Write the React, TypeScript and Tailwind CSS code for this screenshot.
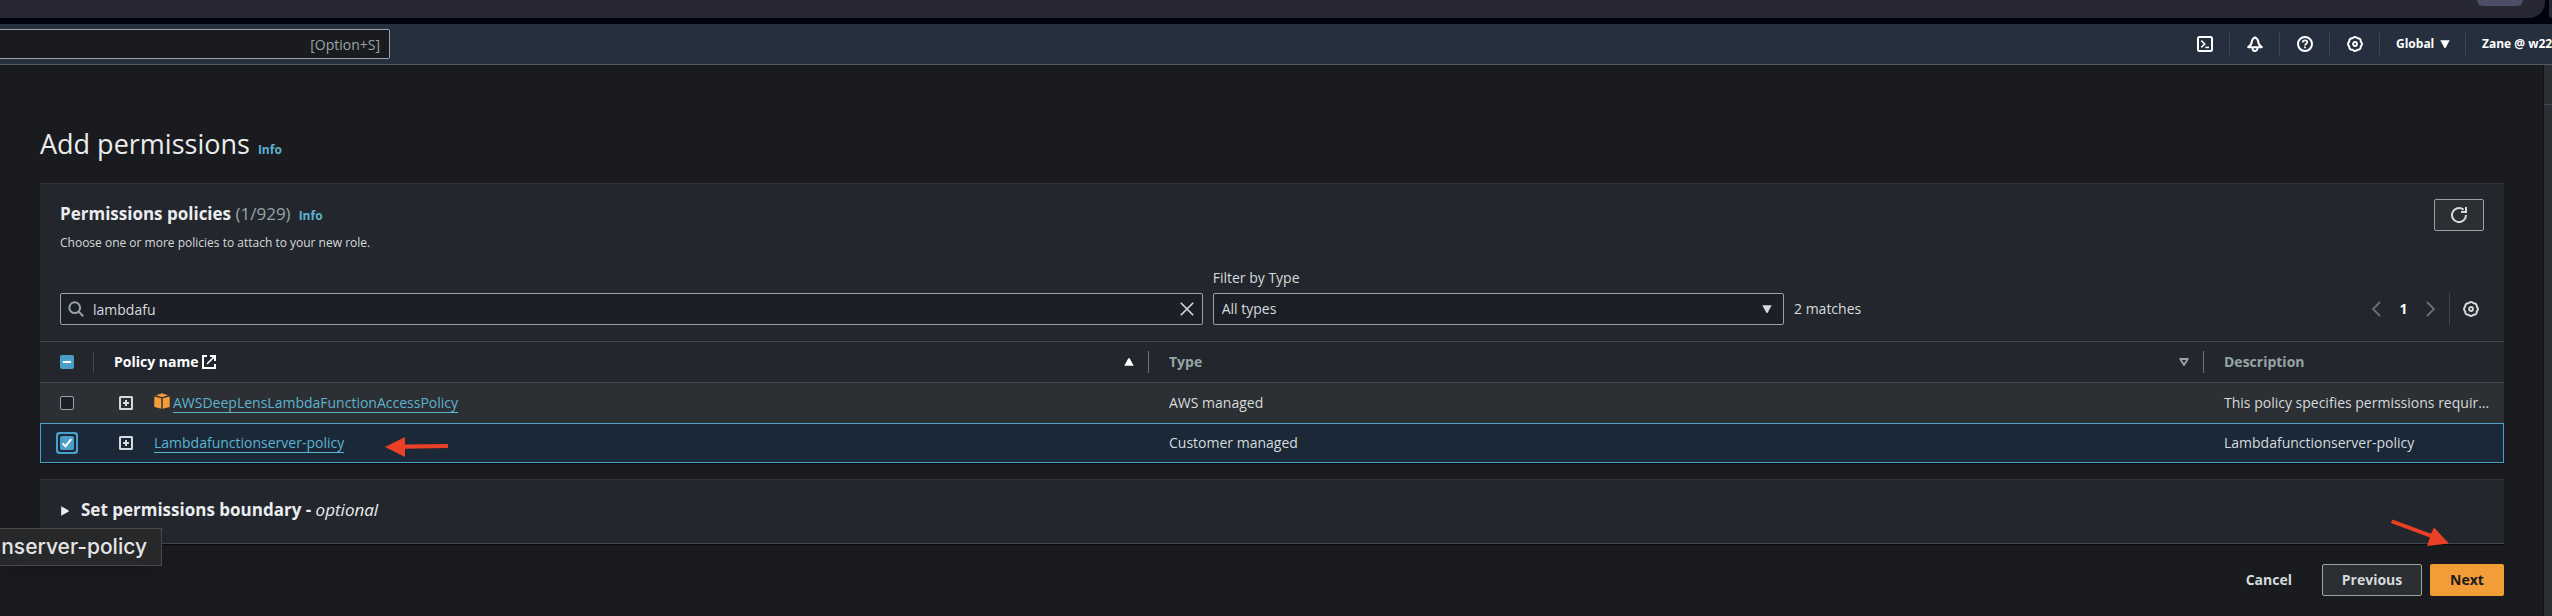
import type { ReactNode } from "react";

function GearIcon() {
  return (
    <svg viewBox="0 0 16 16" className="size-4" fill="none" stroke="currentColor" strokeLinejoin="round" aria-hidden="true">
      <path
        d="M13.73 10.37 A2.9 2.9 0 0 1 10.37 13.73 A2.9 2.9 0 0 1 5.63 13.73 A2.9 2.9 0 0 1 2.27 10.37 A2.9 2.9 0 0 1 2.27 5.63 A2.9 2.9 0 0 1 5.63 2.27 A2.9 2.9 0 0 1 10.37 2.27 A2.9 2.9 0 0 1 13.73 5.63 A2.9 2.9 0 0 1 13.73 10.37 Z"
        strokeWidth="2"
      />
      <circle cx="8" cy="8" r="2" strokeWidth="1.8" />
    </svg>
  );
}

function TerminalIcon() {
  return (
    <svg viewBox="0 0 16 16" className="size-4" fill="none" stroke="currentColor" aria-hidden="true">
      <rect x="1" y="1" width="14" height="14" rx="1.5" strokeWidth="2" />
      <path d="M4.3 4.6 L7.7 8 L4.3 11.4" strokeWidth="1.6" />
      <path d="M8.3 11.4 H12" strokeWidth="1.6" />
    </svg>
  );
}

function BellIcon() {
  return (
    <svg viewBox="0 0 16 16" className="size-4" fill="none" stroke="currentColor" strokeWidth="2" strokeLinejoin="round" aria-hidden="true">
      <path d="M8 1.3 C6.2 2.2 4.9 3.6 4.8 5.6 C4.7 8 3.6 9.6 1.2 11.2 H14.8 C12.4 9.6 11.3 8 11.2 5.6 C11.1 3.6 9.8 2.2 8 1.3 Z" />
      <path d="M5.6 11.4 V12.4 C5.6 15.9 10.4 15.9 10.4 12.4 V11.4" />
    </svg>
  );
}

function HelpIcon() {
  return (
    <svg viewBox="0 0 16 16" className="size-4" fill="none" stroke="currentColor" aria-hidden="true">
      <circle cx="8" cy="8" r="7" strokeWidth="2" />
      <path d="M5.7 6.4 C5.7 4.9 6.8 4.3 8 4.3 C9.3 4.3 10.3 5 10.3 6.2 C10.3 7.7 8 7.8 8 9.6" strokeWidth="1.7" />
      <path d="M8 10.6 V12.3" strokeWidth="1.8" />
    </svg>
  );
}

function Triangle({ className }: { className: string }) {
  return (
    <svg viewBox="0 0 10 8" className={`h-2 w-2.5 shrink-0 ${className}`} fill="currentColor" aria-hidden="true">
      <path d="M0.3 0.2 H9.7 L5.8 7.4 Q5 8.4 4.2 7.4 Z" />
    </svg>
  );
}

function PlusBox() {
  return (
    <button type="button" aria-label="Expand policy" className="block">
      <svg viewBox="0 0 14 14" className="size-3.5" fill="none" stroke="#d5dbdb" strokeWidth="2" aria-hidden="true">
        <rect x="1" y="1" width="12" height="12" rx="0.5" />
        <path d="M4 7 H10 M7 4 V10" />
      </svg>
    </button>
  );
}

function CubeIcon() {
  return (
    <svg viewBox="0 0 16 16" className="mb-1 size-4 shrink-0" fill="#f29d38" aria-hidden="true">
      <path d="M2 2.3 L8 0.3 L14 2.3 L8 4.2 Z" />
      <path d="M0.3 3.4 L7.3 5.2 V15.8 L0.3 13.9 Z" />
      <path d="M15.7 3.4 L8.7 5.2 V15.8 L15.7 13.9 Z" />
    </svg>
  );
}

function NavButton({ label, first, children }: { label: string; first?: boolean; children: ReactNode }) {
  return (
    <div className="flex h-10 items-center">
      <span className={first ? "w-px" : "h-[22px] w-px bg-[#414750]"} />
      <button type="button" aria-label={label} className="flex w-[49px] justify-center">
        {children}
      </button>
    </div>
  );
}

function ColumnHead({ children, last }: { children: ReactNode; last?: boolean }) {
  return (
    <th className="p-0 text-left font-bold">
      <div className={`flex h-10 items-center justify-between pl-5 ${last ? "pr-5" : ""}`}>{children}</div>
    </th>
  );
}

const policies = [
  {
    name: "AWSDeepLensLambdaFunctionAccessPolicy",
    type: "AWS managed",
    description: "This policy specifies permissions requir…",
    aws: true,
    selected: false,
  },
  {
    name: "Lambdafunctionserver-policy",
    type: "Customer managed",
    description: "Lambdafunctionserver-policy",
    aws: false,
    selected: true,
  },
];

export default function App() {
  return (
    <div className="relative flex min-h-screen flex-col overflow-hidden bg-[#1a1b1f] font-['Open_Sans','Noto_Sans',sans-serif] text-sm font-medium text-[#d5dbdb]">
      <div className="flex h-6 gap-1 bg-[#01020f] pb-1.5">
        <div className="flex flex-1 justify-end rounded-br-2xl bg-[#272833] pr-[22px]">
          <div className="h-1.5 w-[46px] rounded-b-lg bg-[#4b4e66]" />
        </div>
        <div className="w-[3px] rounded-bl-2xl bg-[#272833]" />
      </div>

      <header className="flex h-[41px] items-start justify-between border-b border-[#555b63] bg-[#262f3d]">
        <div className="relative mt-[5px] w-[390px]">
          <input
            type="search"
            aria-label="Search"
            className="block h-[30px] w-full rounded-r-xs border border-l-0 border-[#95a5a6] bg-[#1a1b1f]"
          />
          <span className="pointer-events-none absolute top-1.5 right-2.5 leading-5 text-[#95a5a6]">[Option+S]</span>
        </div>
        <nav className="flex text-xs font-bold text-white">
          <NavButton label="CloudShell" first>
            <TerminalIcon />
          </NavButton>
          <NavButton label="Notifications">
            <BellIcon />
          </NavButton>
          <NavButton label="Help">
            <HelpIcon />
          </NavButton>
          <NavButton label="Settings">
            <GearIcon />
          </NavButton>
          <div className="flex h-10 items-center">
            <span className="h-[22px] w-px bg-[#414750]" />
            <button type="button" className="flex w-[85px] items-center gap-1.5 pl-4">
              Global
              <Triangle className="" />
            </button>
          </div>
          <div className="flex h-10 items-center">
            <span className="h-[22px] w-px bg-[#414750]" />
            <button type="button" className="w-[86px] overflow-hidden pl-4 text-left whitespace-nowrap">
              Zane @ w22
            </button>
          </div>
        </nav>
      </header>

      <div className="flex flex-1">
        <main className="min-w-0 flex-1 pr-[39px] pl-10">
          <div className="flex items-baseline gap-2 pt-[61px]">
            <h1 className="text-[27px] leading-9 text-[#eaeded]">Add permissions</h1>
            <a href="#info" className="text-xs font-bold text-[#5cb3d1]">
              Info
            </a>
          </div>

          <section className="mt-[21px] border-t border-[#303237] bg-[#23262d] shadow-[0_1px_1px_#0b0c10]">
            <div className="flex items-start justify-between px-5 pt-[15px]">
              <div>
                <div className="flex items-baseline gap-2">
                  <h2 className="text-[17px] leading-[30px] font-bold text-[#eaeded]">
                    Permissions policies <span className="font-normal text-[#95a5a6]">(1/929)</span>
                  </h2>
                  <a href="#policies-info" className="text-xs font-bold text-[#5cb3d1]">
                    Info
                  </a>
                </div>
                <p className="mt-1 text-xs leading-5">Choose one or more policies to attach to your new role.</p>
              </div>
              <button
                type="button"
                aria-label="Refresh"
                className="flex h-8 w-[50px] items-center justify-center rounded-xs border border-[#95a5a6] bg-[#2b2e32]"
              >
                <svg viewBox="0 0 16 16" className="size-4" fill="none" stroke="currentColor" strokeWidth="2" aria-hidden="true">
                  <path d="M15 8 A7 7 0 1 1 12.6 2.8" />
                  <path d="M15 0 V5 H10" />
                </svg>
              </button>
            </div>

            <div className="mt-3.5 flex items-end px-5 pb-4">
              <div className="relative flex-[2_1_0]">
                <svg viewBox="0 0 16 16" className="pointer-events-none absolute top-2 left-2 size-4" fill="none" stroke="#95a5a6" strokeWidth="2" aria-hidden="true">
                  <circle cx="6.7" cy="6.7" r="5.4" />
                  <path d="M10.6 10.6 L15.2 15.2" />
                </svg>
                <input
                  type="text"
                  aria-label="Filter policies"
                  defaultValue="lambdafu"
                  className="block h-8 w-full rounded-xs border border-[#95a5a6] bg-[#1c1f27] px-8"
                />
                <button type="button" aria-label="Clear filter" className="absolute top-2 right-2">
                  <svg viewBox="0 0 16 16" className="size-4" fill="none" stroke="currentColor" strokeWidth="1.6" aria-hidden="true">
                    <path d="M1.8 1.8 L14.2 14.2 M14.2 1.8 L1.8 14.2" />
                  </svg>
                </button>
              </div>
              <div className="ml-2.5 flex-[1_1_0]">
                <label htmlFor="type-filter" className="block pb-1 leading-[22px]">
                  Filter by Type
                </label>
                <div className="relative">
                  <select
                    id="type-filter"
                    className="block h-8 w-full appearance-none rounded-xs border border-[#95a5a6] bg-[#1c1f27] px-2"
                  >
                    <option>All types</option>
                  </select>
                  <Triangle className="pointer-events-none absolute top-3 right-3" />
                </div>
              </div>
              <div className="ml-2.5 flex h-8 w-[690px] items-center justify-between">
                <span>2 matches</span>
                <div className="flex items-center">
                  <button type="button" aria-label="Previous page" className="text-[#687078]">
                    <svg viewBox="0 0 16 16" className="size-4" fill="none" stroke="currentColor" strokeWidth="1.8" aria-hidden="true">
                      <path d="M12 1 L5 8 L12 15" />
                    </svg>
                  </button>
                  <span className="w-[39px] text-center font-bold text-white">1</span>
                  <button type="button" aria-label="Next page" className="text-[#687078]">
                    <svg viewBox="0 0 16 16" className="size-4" fill="none" stroke="currentColor" strokeWidth="1.8" aria-hidden="true">
                      <path d="M4 1 L11 8 L4 15" />
                    </svg>
                  </button>
                  <span className="mr-[13px] ml-2.5 h-8 w-px bg-[#414750]" />
                  <button type="button" aria-label="Preferences" className="mr-[5px]">
                    <GearIcon />
                  </button>
                </div>
              </div>
            </div>

            <table className="w-full table-fixed border-separate border-spacing-0">
              <colgroup>
                <col className="w-[54px]" />
                <col />
                <col />
                <col className="w-[300px]" />
              </colgroup>
              <thead>
                <tr className="text-[#95a5a6] *:border-y *:border-[#414750]">
                  <th className="p-0">
                    <div className="flex h-10 items-center justify-between pl-5">
                      <span className="relative block size-3.5">
                        <input type="checkbox" aria-label="Select all policies" className="block size-3.5 appearance-none rounded-xs bg-[#4a9fc9]" />
                        <span className="pointer-events-none absolute top-1.5 left-[3px] h-0.5 w-2 bg-white" />
                      </span>
                      <span className="h-[22px] w-px bg-[#414750]" />
                    </div>
                  </th>
                  <ColumnHead>
                    <span className="flex items-center gap-1 text-white">
                      Policy name
                      <svg viewBox="0 0 14 14" className="size-3.5" fill="none" stroke="currentColor" strokeWidth="2" aria-hidden="true">
                        <path d="M5 1 H1 V13 H13 V9" />
                        <path d="M8 1 H13 V6" />
                        <path d="M12.6 1.4 L5 9" strokeWidth="1.6" />
                      </svg>
                    </span>
                    <span className="flex items-center gap-3.5">
                      <Triangle className="rotate-180 text-white" />
                      <span className="h-[22px] w-px bg-[#687078]" />
                    </span>
                  </ColumnHead>
                  <ColumnHead>
                    Type
                    <span className="flex items-center gap-3.5">
                      <svg viewBox="0 0 10 8" className="h-2 w-2.5" fill="none" stroke="currentColor" strokeWidth="1.8" strokeLinejoin="round" aria-hidden="true">
                        <path d="M1.2 1 H8.8 L5 7 Z" />
                      </svg>
                      <span className="h-[22px] w-px bg-[#687078]" />
                    </span>
                  </ColumnHead>
                  <ColumnHead last>Description</ColumnHead>
                </tr>
              </thead>
              <tbody>
                {policies.map((p) => (
                  <tr
                    key={p.name}
                    className={p.selected ? "bg-[#1a2838] outline outline-1 -outline-offset-1 outline-[#4a9fc9]" : "bg-[#2c2f33]"}
                  >
                    <td className="p-0">
                      <div className="flex h-10 items-center pl-5">
                        <span className={`relative block size-3.5 rounded-[1px] ${p.selected ? "ring-2 ring-[#4a9fc9] ring-offset-2 ring-offset-[#1a2838]" : ""}`}>
                          <input
                            type="checkbox"
                            aria-label={`Select ${p.name}`}
                            defaultChecked={p.selected}
                            className="block size-3.5 appearance-none rounded-xs border border-[#95a5a6] bg-[#1c1f27] checked:border-[#4a9fc9] checked:bg-[#4a9fc9]"
                          />
                          {p.selected && (
                            <svg viewBox="0 0 14 14" className="pointer-events-none absolute inset-0" fill="none" stroke="#fff" strokeWidth="2" aria-hidden="true">
                              <path d="M2.6 7.4 L5.6 10.2 L11.2 3.2" />
                            </svg>
                          )}
                        </span>
                      </div>
                    </td>
                    <td className="p-0">
                      <div className="flex h-10 items-center pl-[25px]">
                        <PlusBox />
                        <span className="ml-[21px] flex items-center gap-[3px]">
                          {p.aws && <CubeIcon />}
                          <a href="#policy" className="border-b border-[#5cb3d1] leading-[18px] text-[#5cb3d1]">
                            {p.name}
                          </a>
                        </span>
                      </div>
                    </td>
                    <td className="py-0 pr-0 pl-5">{p.type}</td>
                    <td className="overflow-hidden py-0 pr-0 pl-5 whitespace-nowrap">{p.description}</td>
                  </tr>
                ))}
              </tbody>
            </table>
          </section>

          <section className="mt-4 border-t border-b border-t-[#303237] border-b-[#414750] bg-[#23262d] shadow-[0_1px_1px_#0b0c10]">
            <button type="button" className="mb-0.5 flex h-[61px] items-center gap-[11px] pl-5 text-[17px] text-[#eaeded]">
              <Triangle className="-rotate-90" />
              <span className="font-bold">
                Set permissions boundary - <em className="font-normal italic">optional</em>
              </span>
            </button>
          </section>

          <footer className="flex justify-end pt-5 pb-5 font-bold">
            <button type="button" className="h-8 px-[30px]">
              Cancel
            </button>
            <button type="button" className="h-8 w-[100px] rounded-xs border border-[#95a5a6] bg-[#2b2e32]">
              Previous
            </button>
            <button type="button" className="ml-2 h-8 w-[74px] rounded-xs bg-[#f29d38] text-[#1a1b1f]">
              Next
            </button>
          </footer>
        </main>
        <aside className="w-[9px] border-l border-[#101115] bg-[#2c2f33]">
          <div className="h-10 border-b border-[#414750]" />
        </aside>
      </div>

      <div className="absolute top-[528px] left-0 flex h-[38px] w-[162px] items-center justify-end border border-l-0 border-[#4a4a4a] bg-[#27282a] pr-3.5 font-['Inter',sans-serif] text-[21px] whitespace-nowrap text-[#e4e4e4] shadow-lg">
        nserver-policy
      </div>

      <svg viewBox="0 0 64 22" className="pointer-events-none absolute top-[436px] left-[385px] h-[22px] w-16" fill="#ea4025" aria-hidden="true">
        <path d="M0 11 L20 1 V8.4 L63 8 V12 L20 12.8 V21 Z" />
      </svg>
      <svg viewBox="0 0 60 28" className="pointer-events-none absolute top-[519px] right-[102px] h-7 w-[60px]" fill="#ea4025" aria-hidden="true">
        <path d="M2.4 0.5 L41 14.8 L44 8.5 L59 24.6 L37 27 L40 18.5 L1 4 Z" />
      </svg>
    </div>
  );
}
